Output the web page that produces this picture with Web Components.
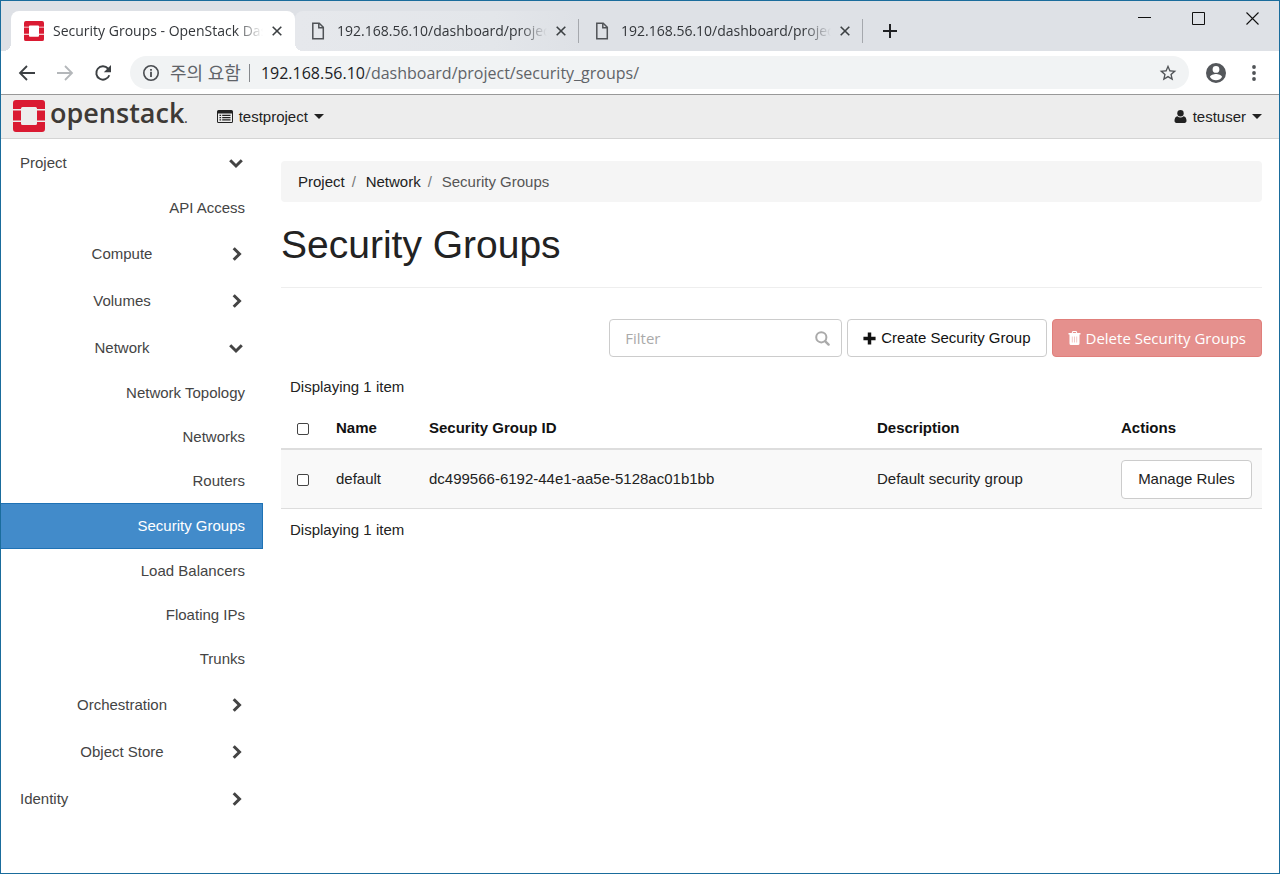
<!DOCTYPE html>
<html lang="en">
<head>
<meta charset="utf-8">
<title>Security Groups - OpenStack Dashboard</title>
<style>
    html, body {
        margin: 0;
        padding: 0;
    }

    body {
        --dash-font: "Liberation Sans", Arial, sans-serif;
        --chrome-font: "Open Sans", "Noto Sans CJK KR", sans-serif;
        --line: #ddd;
        font-family: var(--dash-font);
        font-size: 15px;
        line-height: 22px;
        color: #222;
        background: #fff;
    }
</style>
</head>
<body>
<browser-window>
    <browser-tab slot="tab" icon="openstack" active>Security Groups - OpenStack Dashboard</browser-tab>
    <browser-tab slot="tab" icon="page" hovered>192.168.56.10/dashboard/project/</browser-tab>
    <browser-tab slot="tab" icon="page">192.168.56.10/dashboard/project/</browser-tab>
    <address-bar slot="toolbar" host="192.168.56.10" path="/dashboard/project/security_groups/">주의 요함</address-bar>

    <dash-header project="testproject" user="testuser"></dash-header>
    <dash-layout>
        <side-nav slot="nav">
            <nav-group label="Project" open>
                <nav-item>API Access</nav-item>
                <nav-group label="Compute" nested></nav-group>
                <nav-group label="Volumes" nested></nav-group>
                <nav-group label="Network" nested open>
                    <nav-item>Network Topology</nav-item>
                    <nav-item>Networks</nav-item>
                    <nav-item>Routers</nav-item>
                    <nav-item active>Security Groups</nav-item>
                    <nav-item>Load Balancers</nav-item>
                    <nav-item>Floating IPs</nav-item>
                    <nav-item>Trunks</nav-item>
                </nav-group>
                <nav-group label="Orchestration" nested></nav-group>
                <nav-group label="Object Store" nested></nav-group>
            </nav-group>
            <nav-group label="Identity"></nav-group>
        </side-nav>
        <bread-crumb>
            <a href="#project">Project</a>
            <a href="#network">Network</a>
            <span>Security Groups</span>
        </bread-crumb>
        <page-title>Security Groups</page-title>
        <table-actions></table-actions>
        <groups-table></groups-table>
    </dash-layout>
</browser-window>

<script>
const ICONS = {
    openstack: `<svg viewBox="0 0 32 32">
        <path fill="#da1a32" d="M3 0h26a3 3 0 0 1 3 3v6h-8V8.500a1.500 1.500 0 0 0-1.500-1.500h-13A1.500 1.500 0 0 0 8 8.500V9H0V3a3 3 0 0 1 3-3z"/>
        <path fill="#da1a32" d="M0 22h8v1.500A1.500 1.500 0 0 0 9.500 25h13a1.500 1.500 0 0 0 1.500-1.500V22h8v7a3 3 0 0 1-3 3H3a3 3 0 0 1-3-3z"/>
        <path fill="#da1a32" d="M0 10.500h8v10H0zM24 10.500h8v10h-8z"/>
    </svg>`,
    page: `<svg viewBox="0 0 20 20" fill="none" stroke="#505357" stroke-width="1.500">
        <path d="M4.800 2.200h6.400l4.100 4.100v11.500H4.800z"/><path d="M10.800 2.500v4.200h4.300"/>
    </svg>`,
    close: `<svg viewBox="0 0 10 10" stroke="#3c4043" stroke-width="1.600"><path d="M.7.7l8.600 8.600M9.300.7L.7 9.300"/></svg>`,
    add: `<svg viewBox="0 0 14 14" stroke="#202124" stroke-width="2"><path d="M7 0v14M0 7h14"/></svg>`,
    minimize: `<svg viewBox="0 0 13 13" stroke="#111" stroke-width="1"><path d="M0 5.500h13"/></svg>`,
    maximize: `<svg viewBox="0 0 13 13" fill="none" stroke="#111" stroke-width="1"><path d="M.5.5h12v12H.5z"/></svg>`,
    quit: `<svg viewBox="0 0 13 13" stroke="#111" stroke-width="1.100"><path d="M.5.5l12 12M12.500.5l-12 12"/></svg>`,
    back: `<svg viewBox="0 0 18 18" fill="none" stroke="#3c4043" stroke-width="1.800"><path d="M17 9H2.500M9 2L2 9l7 7"/></svg>`,
    forward: `<svg viewBox="0 0 18 18" fill="none" stroke="#b4b7ba" stroke-width="1.800"><path d="M1 9h14.500M9 2l7 7-7 7"/></svg>`,
    reload: `<svg viewBox="0 0 18 18"><path fill="none" stroke="#3c4043" stroke-width="1.900" d="M15.300 11.200A6.700 6.700 0 1 1 14 4.500L15.500 6"/><path fill="#3c4043" d="M17 1v7.200H9.800z"/></svg>`,
    info: `<svg viewBox="0 0 18 18"><circle cx="9" cy="9" r="7.200" fill="none" stroke="#4a4d51" stroke-width="1.600"/><path fill="#4a4d51" d="M8.100 7.800h1.800V13H8.100zM8.100 5h1.800v1.800H8.100z"/></svg>`,
    star: `<svg viewBox="0 0 24 24"><path fill="#505357" d="M22 9.240l-7.190-.62L12 2 9.190 8.630 2 9.240l5.460 4.730L5.820 21 12 17.270 18.180 21l-1.630-7.030zM12 15.400l-3.760 2.270 1-4.280-3.320-2.880 4.380-.38L12 6.100l1.710 4.040 4.380.38-3.320 2.880 1 4.280z"/></svg>`,
    account: `<svg viewBox="2 2 20 20"><path fill="#54575b" d="M12 2a10 10 0 1 0 0 20 10 10 0 0 0 0-20zm0 3a3.400 3.400 0 1 1 0 6.800A3.400 3.400 0 0 1 12 5zm0 14.200a7.200 7.200 0 0 1-6-3.220c.03-2 4-3.080 6-3.080s5.970 1.090 6 3.080a7.200 7.200 0 0 1-6 3.220z"/></svg>`,
    dots: `<svg viewBox="0 0 4 16" fill="#505357"><circle cx="2" cy="2" r="1.900"/><circle cx="2" cy="8" r="1.900"/><circle cx="2" cy="14" r="1.900"/></svg>`,
    list: `<svg viewBox="0 0 16 14"><path fill="#222" fill-rule="evenodd" d="M1.500 0h13A1.500 1.500 0 0 1 16 1.500v10a1.500 1.500 0 0 1-1.500 1.500h-13A1.500 1.500 0 0 1 0 11.500v-10A1.500 1.500 0 0 1 1.500 0zM1 3.500V11.500a.5.5 0 0 0 .5.5h13a.5.5 0 0 0 .5-.5v-8z"/><path fill="#222" d="M2.500 4.700h1.600v1.200H2.500zM5.200 4.700h8.300v1.200H5.200zM2.500 7h1.600v1.200H2.500zM5.200 7h8.300v1.200H5.200zM2.500 9.300h1.600v1.200H2.500zM5.200 9.300h8.300v1.200H5.200z"/></svg>`,
    user: `<svg viewBox="0 0 12 13" fill="#222"><circle cx="6" cy="3.300" r="3.200"/><path d="M3 6.200a4.200 4.200 0 0 0 6 0c2.200.2 3 2.300 3 4.600 0 1.300-.8 2.200-1.900 2.200H1.900C.8 13 0 12.100 0 10.800c0-2.300.8-4.400 3-4.600z"/></svg>`,
    caret: `<svg viewBox="0 0 10 5"><path fill="#222" d="M0 0h10L5 5z"/></svg>`,
    down: `<svg viewBox="0 0 14 14" fill="none" stroke="#444" stroke-width="3"><path d="M1.200 4.200L7 10l5.800-5.800"/></svg>`,
    right: `<svg viewBox="0 0 14 14" fill="none" stroke="#444" stroke-width="3"><path d="M4.700 1.200L10.500 7l-5.800 5.800"/></svg>`,
    search: `<svg viewBox="0 0 15 15" fill="none" stroke="#aaa"><circle cx="6.300" cy="6.300" r="5.100" stroke-width="2"/><path stroke-width="2.400" stroke-linecap="round" d="M10.300 10.300l3.300 3.300"/></svg>`,
    plus: `<svg viewBox="0 0 12 12"><path fill="#111" d="M4.400.4h3.200v4h4v3.200h-4v4H4.400v-4h-4V4.400h4z"/></svg>`,
    trash: `<svg viewBox="0 0 12 14"><path fill="#fff" fill-rule="evenodd" d="M4 0h4l.8 2H12v1.500h-1V12.500A1.500 1.500 0 0 1 9.500 14h-7A1.500 1.500 0 0 1 1 12.500V3.500H0V2h3.200zM4.700 1l-.4 1h3.400l-.4-1zM3.400 5.500v6h.5v-6zM5.750 5.500v6h.5v-6zM8.100 5.500v6h.5v-6z"/></svg>`
};

function define(name, template) {
    customElements.define(name, class extends HTMLElement {
        constructor() {
            super();
            this.attachShadow({ mode: "open" });
        }

        connectedCallback() {
            this.shadowRoot.innerHTML = template(this);
        }
    });
}

define("svg-icon", (el) => `
    <style>
        :host {
            display: inline-flex;
            flex: none;
            width: 16px;
            height: 16px;
        }

        svg {
            width: 100%;
            height: 100%;
            display: block;
        }
    </style>
    ${ICONS[el.getAttribute("name")]}
`);

define("browser-window", () => `
    <style>
        :host {
            display: flex;
            flex-direction: column;
            box-sizing: border-box;
            min-height: 100vh;
            border: 1px solid #1a6c9c;
        }

        .strip {
            display: flex;
            align-items: flex-end;
            justify-content: space-between;
            height: 50px;
            padding-left: 10px;
            background: #dee1e6;
        }

        .tabs {
            display: flex;
            align-items: center;
            min-width: 0;
        }

        .controls {
            display: flex;
            align-self: flex-start;
        }

        button {
            display: flex;
            align-items: center;
            justify-content: center;
            padding: 0;
            border: 0;
            background: none;
        }

        .new {
            width: 54px;
            height: 40px;
        }

        .new svg-icon {
            width: 14px;
            height: 14px;
        }

        .controls button {
            width: 54px;
            height: 35px;
        }

        .controls svg-icon {
            width: 13px;
            height: 13px;
        }
    </style>
    <div class="strip">
        <div class="tabs">
            <slot name="tab"></slot>
            <button class="new" aria-label="New tab"><svg-icon name="add"></svg-icon></button>
        </div>
        <div class="controls">
            <button aria-label="Minimize"><svg-icon name="minimize"></svg-icon></button>
            <button aria-label="Maximize"><svg-icon name="maximize"></svg-icon></button>
            <button aria-label="Close window"><svg-icon name="quit"></svg-icon></button>
        </div>
    </div>
    <slot name="toolbar"></slot>
    <slot></slot>
`);

define("browser-tab", (el) => `
    <style>
        :host {
            display: flex;
            align-items: center;
            gap: 9px;
            box-sizing: border-box;
            position: relative;
            width: 284px;
            height: 40px;
            padding: 0 13px;
            font: 14px/20px var(--chrome-font);
            color: #33363a;
        }

        :host([active]) {
            background: #fff;
            border-radius: 8px 8px 0 0;
        }

        :host([hovered]) {
            background: linear-gradient(90deg, #e6e8ec, #e3e6ea 70%, #dee1e6);
            border-radius: 8px 8px 0 0;
        }

        /* feet of the active tab */
        :host([active])::before,
        :host([active])::after {
            content: "";
            position: absolute;
            bottom: 0;
            width: 8px;
            height: 8px;
            z-index: 1;
        }

        :host([active])::before {
            left: -8px;
            background: radial-gradient(circle at 0 0, transparent 8px, #fff 8px);
        }

        :host([active])::after {
            right: -8px;
            background: radial-gradient(circle at 100% 0, transparent 8px, #fff 8px);
        }

        .end {
            position: absolute;
            right: 0;
            width: 1px;
            height: 24px;
            background: #a5a8ad;
        }

        :host([active]) .end {
            display: none;
        }

        .icon {
            width: 20px;
            height: 20px;
        }

        .title {
            flex: 1;
            overflow: hidden;
            white-space: nowrap;
            mask-image: linear-gradient(90deg, #000 calc(100% - 28px), transparent);
        }

        button {
            display: flex;
            padding: 0;
            border: 0;
            background: none;
        }

        button svg-icon {
            width: 10px;
            height: 10px;
        }
    </style>
    <svg-icon class="icon" name="${el.getAttribute("icon")}"></svg-icon>
    <span class="title"><slot></slot></span>
    <button aria-label="Close tab"><svg-icon name="close"></svg-icon></button>
    <span class="end"></span>
`);

define("address-bar", (el) => `
    <style>
        :host {
            display: flex;
            align-items: center;
            height: 43px;
            padding: 0 17px;
            border-bottom: 1px solid #999;
            background: #fff;
            font: 16px/24px var(--chrome-font);
            color: #5f6368;
        }

        button {
            display: flex;
            flex: none;
            padding: 0;
            border: 0;
            background: none;
        }

        .moves {
            display: flex;
            gap: 20px;
            margin-right: 18px;
        }

        .moves svg-icon {
            width: 18px;
            height: 18px;
        }

        .field {
            display: flex;
            flex: 1;
            align-items: center;
            height: 33px;
            padding: 0 11px 0 12px;
            border-radius: 17px;
            background: #f1f3f4;
        }

        .field svg-icon {
            width: 18px;
            height: 18px;
        }

        .warning {
            margin: 0 8px 0 10px;
            font-size: 18px;
        }

        .bar {
            width: 1px;
            height: 18px;
            margin-right: 11px;
            background: #85888c;
        }

        .url {
            flex: 1;
        }

        .host {
            color: #202124;
        }

        .field .star {
            width: 20px;
            height: 20px;
        }

        .account {
            margin: 0 20px 0 17px;
        }

        .account svg-icon {
            width: 20px;
            height: 20px;
        }

        .menu {
            width: 16px;
            justify-content: center;
        }

        .menu svg-icon {
            width: 4px;
            height: 16px;
        }
    </style>
    <div class="moves">
        <button aria-label="Back"><svg-icon name="back"></svg-icon></button>
        <button aria-label="Forward"><svg-icon name="forward"></svg-icon></button>
        <button aria-label="Reload"><svg-icon name="reload"></svg-icon></button>
    </div>
    <div class="field">
        <svg-icon name="info"></svg-icon>
        <span class="warning"><slot></slot></span>
        <span class="bar"></span>
        <div class="url" role="textbox" aria-label="Address"><span class="host">${el.getAttribute("host")}</span><span>${el.getAttribute("path")}</span></div>
        <button aria-label="Bookmark this page"><svg-icon class="star" name="star"></svg-icon></button>
    </div>
    <button class="account" aria-label="Account"><svg-icon name="account"></svg-icon></button>
    <button class="menu" aria-label="Menu"><svg-icon name="dots"></svg-icon></button>
`);

define("dash-header", (el) => `
    <style>
        :host {
            display: flex;
            align-items: center;
            height: 43px;
            padding: 0 17px 0 12px;
            border-bottom: 1px solid #d4d4d4;
            background: #ededed;
        }

        .logo {
            display: flex;
            align-items: center;
            gap: 5px;
            margin-right: 29px;
            padding-bottom: 2px;
            color: #3e3a36;
            text-decoration: none;
            font: 600 27px/36px "Open Sans", sans-serif;
        }

        .logo svg-icon {
            width: 32px;
            height: 32px;
        }

        .logo small {
            font-size: 12px;
        }

        button {
            display: flex;
            align-items: center;
            gap: 6px;
            padding: 0;
            border: 0;
            background: none;
            color: inherit;
            font: inherit;
        }

        .user {
            margin-left: auto;
        }

        .list {
            width: 16px;
            height: 14px;
        }

        .person {
            width: 13px;
            height: 13px;
        }

        .caret {
            width: 10px;
            height: 5px;
        }
    </style>
    <a class="logo" href="#home">
        <svg-icon name="openstack"></svg-icon>
        <span>openstack<small>.</small></span>
    </a>
    <button>
        <svg-icon class="list" name="list"></svg-icon>
        <span>${el.getAttribute("project")}</span>
        <svg-icon class="caret" name="caret"></svg-icon>
    </button>
    <button class="user">
        <svg-icon class="person" name="user"></svg-icon>
        <span>${el.getAttribute("user")}</span>
        <svg-icon class="caret" name="caret"></svg-icon>
    </button>
`);

define("dash-layout", () => `
    <style>
        :host {
            display: flex;
            flex: 1;
        }

        main {
            flex: 1;
            min-width: 0;
            padding: 22px 17px 22px 18px;
        }
    </style>
    <slot name="nav"></slot>
    <main><slot></slot></main>
`);

define("side-nav", () => `
    <style>
        :host {
            display: block;
            flex: none;
            width: 262px;
        }
    </style>
    <nav><slot></slot></nav>
`);

define("nav-group", (el) => `
    <style>
        :host {
            display: block;
        }

        button {
            display: flex;
            align-items: center;
            width: 100%;
            height: 47px;
            padding: 0 18px 0 19px;
            border: 0;
            background: none;
            color: #444;
            font: inherit;
            text-align: left;
        }

        :host([nested]) button {
            text-align: center;
        }

        .label {
            flex: 1;
        }

        svg-icon {
            width: 14px;
            height: 14px;
            margin: 0 2px 0 5px;
        }
    </style>
    <button aria-expanded="${el.hasAttribute("open")}">
        <span class="label">${el.getAttribute("label")}</span>
        <svg-icon name="${el.hasAttribute("open") ? "down" : "right"}"></svg-icon>
    </button>
    <slot></slot>
`);

define("nav-item", () => `
    <style>
        :host {
            display: block;
        }

        a {
            display: flex;
            align-items: center;
            justify-content: flex-end;
            box-sizing: border-box;
            height: 44px;
            padding-right: 18px;
            color: #444;
            text-decoration: none;
        }

        :host([active]) a {
            height: 46px;
            padding-right: 17px;
            border: 1px solid #1f72b5;
            border-left: 0;
            background: #428bca;
            color: #fff;
        }
    </style>
    <a href="#"><slot></slot></a>
`);

define("bread-crumb", () => `
    <style>
        :host {
            display: block;
        }

        nav {
            display: flex;
            gap: 21px;
            padding: 10px 17px 9px;
            border-radius: 4px;
            background: #f5f5f5;
            color: #555;
        }

        ::slotted(a) {
            color: #222;
            text-decoration: none;
        }

        ::slotted(a)::after {
            content: "/";
            position: absolute;
            padding-left: 7px;
            color: #777;
        }
    </style>
    <nav aria-label="Breadcrumb"><slot></slot></nav>
`);

define("page-title", () => `
    <style>
        :host {
            display: block;
            margin-bottom: 31px;
            padding: 20px 0;
            border-bottom: 1px solid #eee;
        }

        h1 {
            margin: 0;
            font-size: 39px;
            line-height: 45px;
            font-weight: 400;
        }
    </style>
    <h1><slot></slot></h1>
`);

define("table-actions", () => `
    <style>
        :host {
            display: flex;
            justify-content: flex-end;
            gap: 5px;
        }

        .filter {
            display: flex;
            align-items: center;
            box-sizing: border-box;
            width: 233px;
            height: 38px;
            padding: 0 11px 0 15px;
            border: 1px solid #ccc;
            border-radius: 4px;
        }

        .filter svg-icon {
            width: 15px;
            height: 15px;
        }

        input {
            flex: 1;
            min-width: 0;
            padding: 0;
            border: 0;
            outline: 0;
            background: none;
            font: 15px/22px var(--chrome-font);
        }

        input::placeholder {
            color: #aaa;
        }

        button {
            display: flex;
            align-items: center;
            gap: 5px;
            height: 38px;
            padding: 0 15px;
            border: 1px solid #ccc;
            border-radius: 4px;
            background: #fff;
            color: #111;
            font: inherit;
        }

        .plus {
            width: 13px;
            height: 13px;
        }

        .trash {
            width: 13px;
            height: 14px;
        }

        .danger {
            border-color: #e07f7b;
            background: #e5908d;
            color: #fff;
            font: 15px/22px var(--chrome-font);
        }
    </style>
    <label class="filter">
        <input type="text" placeholder="Filter" aria-label="Filter">
        <svg-icon name="search"></svg-icon>
    </label>
    <button><svg-icon class="plus" name="plus"></svg-icon>Create Security Group</button>
    <button class="danger"><svg-icon class="trash" name="trash"></svg-icon>Delete Security Groups</button>
`);

define("groups-table", () => `
    <style>
        :host {
            display: block;
            padding-top: 19px;
        }

        .count {
            padding: 0 9px;
        }

        table {
            width: 100%;
            margin-bottom: 10px;
            border-collapse: collapse;
            table-layout: fixed;
        }

        th, td {
            padding: 0 10px;
            text-align: left;
        }

        th {
            height: 40px;
            padding-top: 10px;
            border-bottom: 2px solid var(--line);
            color: #111;
        }

        td {
            height: 58px;
            border-bottom: 1px solid var(--line);
            background: #f9f9f9;
        }

        .check {
            width: 25px;
            padding-left: 16px;
            padding-right: 4px;
        }

        .name {
            width: 73px;
        }

        .description {
            width: 224px;
        }

        .actions {
            width: 131px;
        }

        input {
            display: block;
            appearance: none;
            box-sizing: border-box;
            width: 12px;
            height: 12px;
            margin: 2px 0 0;
            border: 1px solid #444;
            border-radius: 2px;
            background: #fff;
        }

        button {
            height: 39px;
            padding: 0 14px;
            border: 1px solid #ccc;
            border-radius: 4px;
            background: #fff;
            color: #222;
            font: inherit;
            width: 100%;
        }
    </style>
    <div class="count">Displaying 1 item</div>
    <table>
        <thead>
            <tr>
                <th class="check"><input type="checkbox" aria-label="Select all"></th>
                <th class="name">Name</th>
                <th>Security Group ID</th>
                <th class="description">Description</th>
                <th class="actions">Actions</th>
            </tr>
        </thead>
        <tbody>
            <tr>
                <td class="check"><input type="checkbox" aria-label="Select default"></td>
                <td>default</td>
                <td>dc499566-6192-44e1-aa5e-5128ac01b1bb</td>
                <td>Default security group</td>
                <td><button>Manage Rules</button></td>
            </tr>
        </tbody>
    </table>
    <div class="count">Displaying 1 item</div>
`);
</script>
</body>
</html>
